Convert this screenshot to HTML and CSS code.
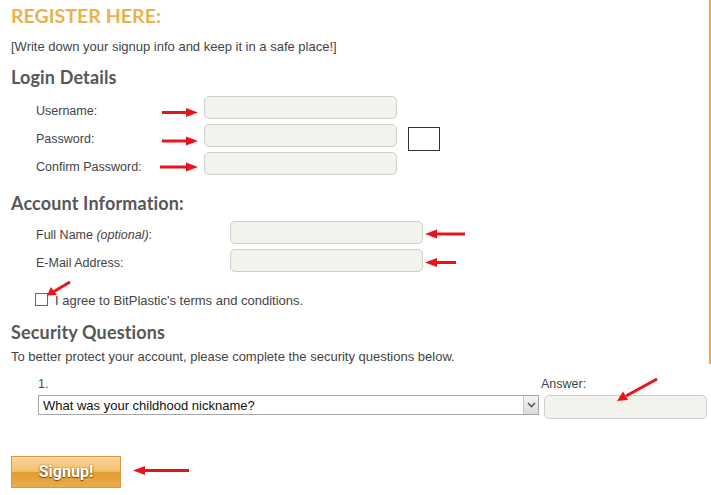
FILE: index.html
```html
<!DOCTYPE html>
<html lang="en">
<head>
<meta charset="utf-8">
<title>Register</title>
<link rel="stylesheet" href="styles.css">
</head>
<body>
<div class="page">
  <div class="framed">
    <h1 class="title">REGISTER HERE:</h1>
    <p class="note">[Write down your signup info and keep it in a safe place!]</p>

    <h2 class="heading h-login">Login Details</h2>
    <div class="rows login">
      <div class="row"><label class="lbl">Username:</label><input class="field" type="text"></div>
      <div class="row"><label class="lbl">Password:</label><input class="field" type="password"><span class="box"></span></div>
      <div class="row"><label class="lbl">Confirm Password:</label><input class="field" type="password"></div>
    </div>

    <h2 class="heading h-account">Account Information:</h2>
    <div class="rows account">
      <div class="row"><label class="lbl">Full Name <em>(optional)</em>:</label><input class="field" type="text"></div>
      <div class="row"><label class="lbl">E-Mail Address:</label><input class="field" type="text"></div>
    </div>

    <label class="agree"><input type="checkbox" class="check"><span>I agree to BitPlastic's terms and conditions.</span></label>

    <h2 class="heading h-security">Security Questions</h2>
    <p class="desc">To better protect your account, please complete the security questions below.</p>
  </div>

  <div class="question">
    <div class="q-col">
      <span class="q-label">1.</span>
      <div class="select-wrap">
        <select class="select">
          <option>What was your childhood nickname?</option>
        </select>
        <span class="select-btn"><svg width="9" height="6" viewBox="0 0 9 6"><path d="M1 1 L4.5 4.5 L8 1" fill="none" stroke="#555" stroke-width="1.6"/></svg></span>
      </div>
    </div>
    <div class="a-col">
      <span class="q-label">Answer:</span>
      <input class="field answer" type="text">
    </div>
  </div>

  <button class="signup" type="button">Signup!</button>

  <svg class="arrows" width="711" height="495" viewBox="0 0 711 495">
    <g stroke="#e8141a" stroke-width="3" fill="#e8141a">
      <line x1="162" y1="112.5" x2="189" y2="112.5"/><polygon points="186,108 198,112.5 186,117" stroke="none"/>
      <line x1="162" y1="141" x2="189" y2="141"/><polygon points="186,136.5 198,141 186,145.5" stroke="none"/>
      <line x1="160" y1="167" x2="189" y2="167"/><polygon points="186,162.5 198,167 186,171.5" stroke="none"/>
      <line x1="434" y1="234" x2="465" y2="234"/><polygon points="437,229.5 425,234 437,238.5" stroke="none"/>
      <line x1="434" y1="262.5" x2="456" y2="262.5"/><polygon points="437,258 425,262.5 437,267" stroke="none"/>
      <line x1="142" y1="470.5" x2="189" y2="470.5"/><polygon points="145,466 133,470.5 145,475" stroke="none"/>
      <line x1="70" y1="282" x2="54" y2="291.5"/><polygon points="51,287 47,295.5 57,295" stroke="none"/>
      <line x1="657" y1="379" x2="626" y2="396"/><polygon points="623,391.5 617,401 628,400" stroke="none"/>
    </g>
  </svg>
</div>
</body>
</html>
```

FILE: styles.css
```css
* { box-sizing: border-box; }
html, body { margin: 0; padding: 0; background: #fff; }
body {
  font-family: "Liberation Sans", Arial, sans-serif;
  font-size: 12.5px;
  color: #444;
}
.page {
  position: relative;
  width: 711px;
  height: 495px;
  overflow: hidden;
}
.framed {
  padding: 4px 0 0 11px;
  border-right: 2px solid #f2a63a;
  width: 711px;
}
.title {
  margin: 0;
  font-family: Lato, "Open Sans", sans-serif;
  font-weight: 700;
  font-size: 19.6px;
  line-height: 24px;
  color: #e9b24f;
}
.note {
  margin: 12px 0 0;
  font-size: 13px;
  line-height: 14px;
}
.heading {
  margin: 0;
  font-family: Lato, "Open Sans", sans-serif;
  font-weight: 700;
  font-size: 18px;
  letter-spacing: 0.15px;
  line-height: 20px;
  color: #575757;
}
.h-login { margin-top: 13px; }
.h-account { margin-top: 18px; }
.h-security { margin-top: 14px; }

.rows {
  display: flex;
  flex-direction: column;
  gap: 5px;
  margin-left: 25px;
}
.login { margin-top: 9px; }
.account { margin-top: 8px; }
.row {
  display: flex;
  align-items: flex-start;
  height: 23px;
}
.lbl {
  line-height: 14px;
  margin-top: 8px;
}
.login .lbl { width: 168px; }
.account .lbl { width: 194px; margin-top: 7px; }
.field {
  width: 193px;
  height: 23px;
  border: 1px solid #d0d0c8;
  border-radius: 5px;
  background: #f3f3ee;
  margin: 0;
  padding: 0 4px;
}
.box {
  width: 32px;
  height: 24px;
  margin: 3px 0 0 11px;
  border: 1px solid #333;
}
.agree {
  display: flex;
  align-items: flex-start;
  margin: 21px 0 0 24px;
  font-size: 13px;
  line-height: 14px;
}
.check {
  appearance: none;
  -webkit-appearance: none;
  width: 13px;
  height: 13px;
  margin: 0 7px 0 0;
  border: 1px solid #666;
  background: #fff;
}
.agree span { margin-top: 1px; }
.desc {
  margin: 8px 0 0;
  font-size: 13px;
  line-height: 14px;
}
.question {
  display: flex;
  margin: 13px 0 0 38px;
  gap: 2px;
}
.q-col, .a-col {
  display: flex;
  flex-direction: column;
}
.q-label {
  line-height: 14px;
  height: 18px;
}
.select-wrap {
  position: relative;
  width: 501px;
  height: 20px;
}
.select {
  appearance: none;
  -webkit-appearance: none;
  width: 501px;
  height: 20px;
  margin: 0;
  padding: 0 0 0 4px;
  border: 1px solid #a5a5a5;
  border-radius: 0;
  background: #fff;
  font-family: "Liberation Sans", Arial, sans-serif;
  font-size: 13px;
  color: #111;
}
.select-btn {
  position: absolute;
  top: 1px;
  right: 1px;
  width: 15px;
  height: 18px;
  display: flex;
  align-items: center;
  justify-content: center;
  border-left: 1px solid #c8c8c8;
  background: linear-gradient(#f4f4f4, #dcdcdc);
  pointer-events: none;
}
.answer {
  width: 163px;
  height: 24px;
  margin-left: 3px;
}
.signup {
  display: block;
  margin: 37px 0 0 11px;
  width: 110px;
  height: 32px;
  border: 1px solid #d49a45;
  padding: 0;
  background: linear-gradient(#fbd597 0%, #f4c06f 48%, #e39c2f 50%, #e9ad4e 100%);
  font-family: "Liberation Sans Narrow", "Roboto", sans-serif;
  font-weight: 700;
  font-size: 16px;
  line-height: 30px;
  color: #fff;
  text-shadow: 0 1px 1px #7a4a10, 0 0 2px #8a5a20;
}
.arrows {
  position: absolute;
  top: 0;
  left: 0;
  pointer-events: none;
}
```
